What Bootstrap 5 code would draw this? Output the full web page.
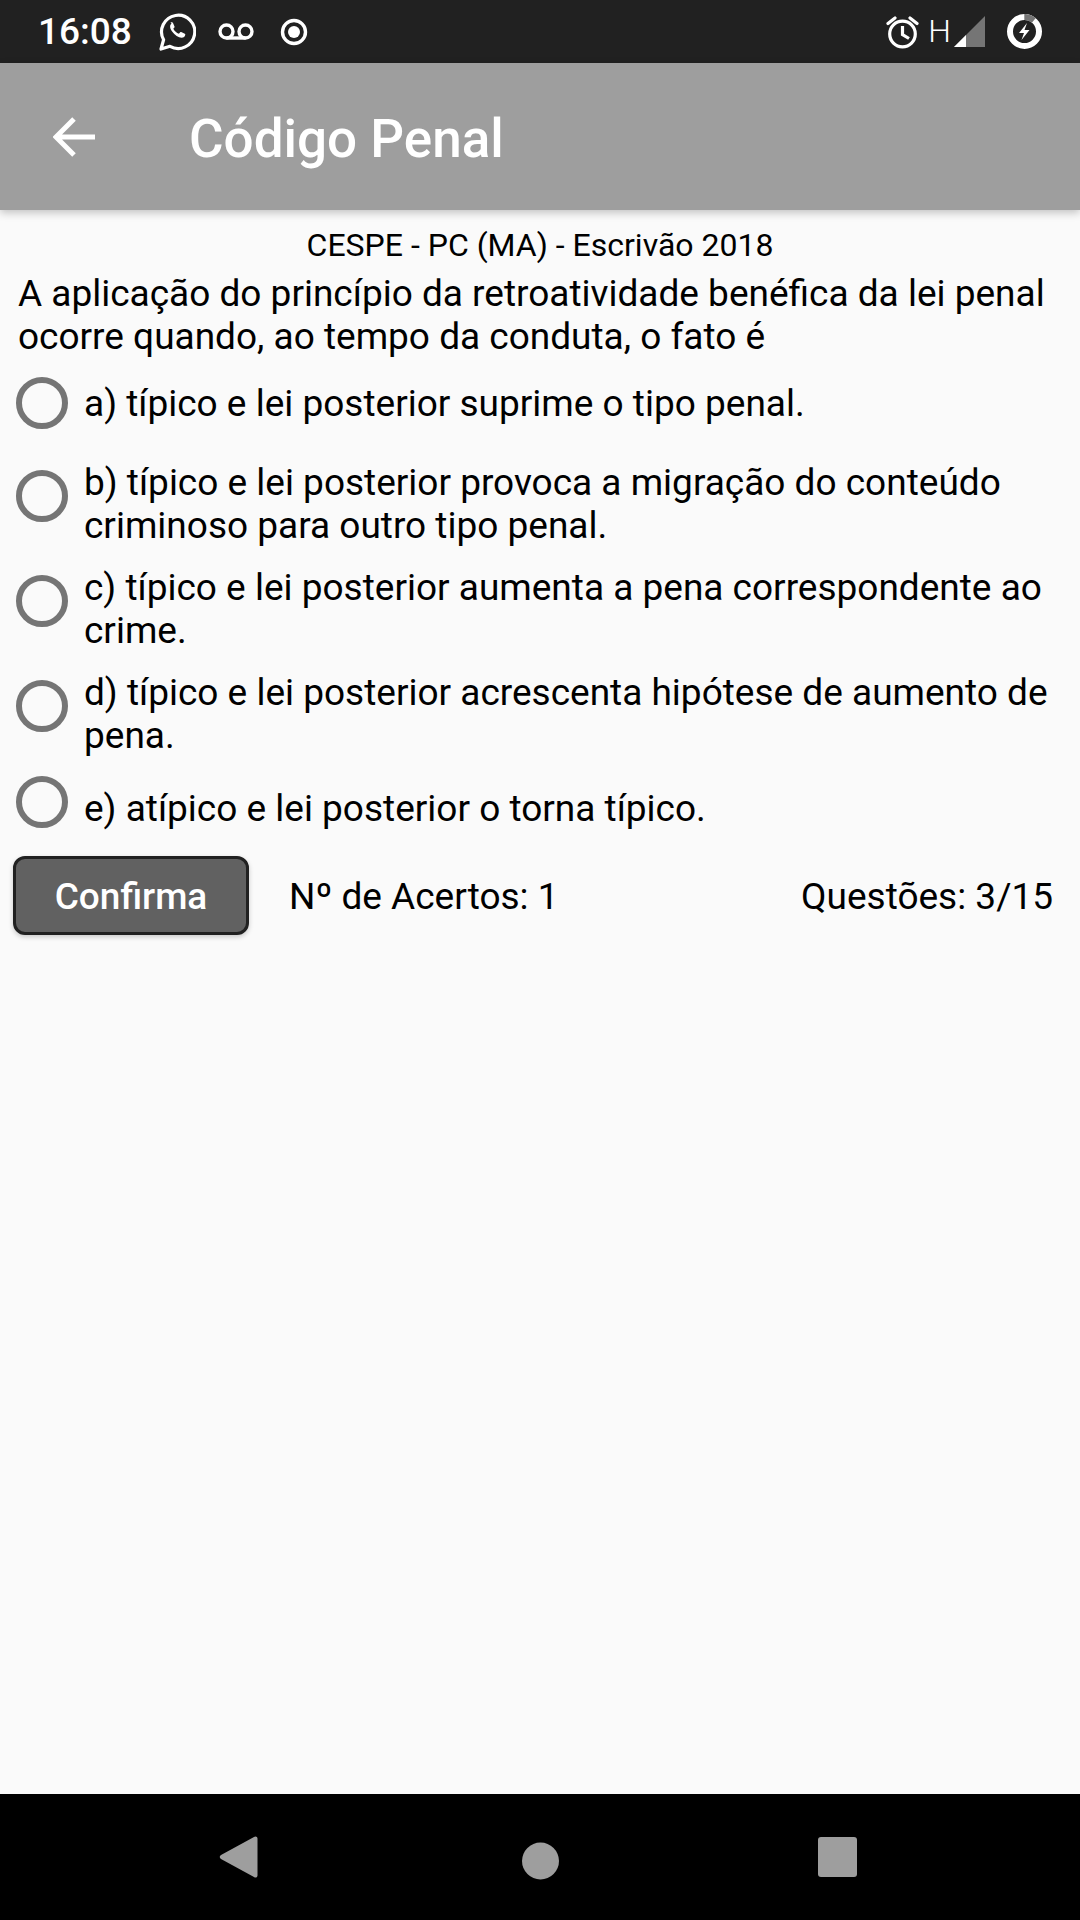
<!DOCTYPE html>
<html>
<head>
  <title>Código Penal</title>
  <link rel="stylesheet" href="https://cdn.jsdelivr.net/npm/bootstrap@5.3.0/dist/css/bootstrap.min.css">
  <style>
    html, body { margin: 0; height: 1920px; overflow: hidden; }
    body { font-family: Roboto, "Liberation Sans", sans-serif; background: #fafafa; color: #000; }
    .screen { height: 1920px; }
    .status-bar { height: 63px; background: #212121; color: #fff; flex: none; }
    .status-time { font-size: 37px; font-weight: 500; margin-left: 38px; line-height: 63px; width: 121px; }
    .ic-voice { margin-left: 22px; }
    .ic-rec { margin-left: 26px; }
    .status-right { margin-right: 38px; }
    .status-h { font-size: 32px; line-height: 63px; margin: 0 3px 0 9px; font-weight: 300; }
    .ic-batt { margin-left: 21px; }
    .app-bar { height: 147px; background: #9e9e9e; color: #fff; flex: none; box-shadow: 0 3px 8px rgba(0,0,0,.22); }
    .ic-back { margin-left: 53px; }
    .app-title { font-size: 53px; font-weight: 500; margin: 5px 0 0 94px; line-height: 1; }
    .quiz { flex: 1 1 auto; padding-top: 17px; font-size: 37px; line-height: 43px; }
    .exam { font-size: 32px; line-height: 37px; text-align: center; }
    .question { padding: 8px 18px 0; }
    .opt { padding-left: 16px; padding-right: 10px; align-items: flex-start; }
    .opt .form-check-input { width: 52px; height: 52px; margin: 0 16px 0 0; flex: none; background: none; border: 6px solid #757575; box-shadow: none; }
    .opt-a { margin-top: 19px; height: 84px; }
    .opt-a span { padding-top: 5px; }
    .opt-b { height: 105px; }
    .opt-b .form-check-input { margin-top: 9px; }
    .opt-e { height: 70px; }
    .opt-e span { padding-top: 11px; }
    .result-row { margin-top: 10px; padding: 0 27px 0 13px; }
    .btn-confirm { width: 236px; height: 79px; padding: 2px 0 0; background: #616161; border: 3px solid #212121; border-radius: 12px; color: #fff; font-size: 37px; font-weight: 500; box-shadow: 0 2px 5px rgba(0,0,0,.2); }
    .hits { margin-left: 40px; padding-top: 2px; }
    .total { padding-top: 2px; }
    .nav-bar { height: 126px; background: #000; flex: none; }
    .nav-icons { display: block; }
  </style>
</head>
<body>
  <div class="screen d-flex flex-column">
    <div class="status-bar d-flex align-items-center">
      <div class="status-time">16:08</div>
      <svg width="37" height="38" viewBox="0 0 37 38" fill="none" stroke="#fff" stroke-width="3.2">
        <path d="M2 36l2.6-9.2A16.6 16.6 0 1 1 11 33.3z" stroke-linejoin="round"/>
        <path d="M12.5 10.5c-2 1.6-1.8 4.6.6 8 2.7 3.8 6.3 6.3 9.5 6.3 2 0 3.4-1.1 3.7-3 .1-.5-.1-.8-.5-1l-3.6-1.8c-.4-.2-.7-.1-1 .2l-1.3 1.6c-2.4-.9-4.3-2.6-5.6-5l1.1-1.4c.2-.3.3-.6.1-1l-1.5-3.5c-.2-.5-1.9-.8-2.5-.4z" fill="#fff" stroke="none"/>
      </svg>
      <svg class="ic-voice" width="36" height="18" viewBox="0 0 36 18" fill="none" stroke="#fff" stroke-width="3.4">
        <circle cx="8.5" cy="8.5" r="6.5"/><circle cx="27.5" cy="8.5" r="6.5"/><path d="M8.5 15h19"/>
      </svg>
      <svg class="ic-rec" width="28" height="28" viewBox="0 0 28 28">
        <circle cx="14" cy="14" r="11.5" fill="none" stroke="#fff" stroke-width="3.4"/><circle cx="14" cy="14" r="6" fill="#fff"/>
      </svg>
      <div class="status-right ms-auto d-flex align-items-center">
        <svg width="33" height="34" viewBox="0 0 33 34" fill="none" stroke="#fff" stroke-width="3.2">
          <circle cx="16.5" cy="19" r="12.8"/><path d="M16.5 11v8.5l6.5 4"/><path d="M2 8.5L9 3M31 8.5L24 3" stroke-linecap="round"/>
        </svg>
        <span class="status-h">H</span>
        <svg width="32" height="32" viewBox="0 0 32 32"><path d="M31 0v31H0z" fill="#757575"/><path d="M12 19v12H0z" fill="#fff"/></svg>
        <svg class="ic-batt" width="35" height="35" viewBox="0 0 35 35">
          <circle cx="17.5" cy="17.5" r="14.5" fill="none" stroke="#fff" stroke-width="6"/>
          <path d="M17.5 3A14.5 14.5 0 0 0 8 6.500" fill="none" stroke="#757575" stroke-width="6" transform="rotate(40 17.5 17.5)"/>
          <path d="M20 9l-8 10h5l-2.5 7 8-10h-5z" fill="#fff"/>
        </svg>
      </div>
    </div>

    <header class="app-bar d-flex align-items-center">
      <svg class="ic-back" width="42" height="42" viewBox="0 0 42 42" fill="none" stroke="#fff" stroke-width="5">
        <path d="M42 21H4M21 3L3 21l18 18"/>
      </svg>
      <h1 class="app-title">Código Penal</h1>
    </header>

    <main class="quiz">
      <div class="exam">CESPE - PC (MA) - Escrivão 2018</div>
      <div class="question">A aplicação do princípio da retroatividade benéfica da lei penal ocorre quando, ao tempo da conduta, o fato é</div>
      <label class="opt opt-a d-flex"><input class="form-check-input" type="radio" name="alt"><span>a) típico e lei posterior suprime o tipo penal.</span></label>
      <label class="opt opt-b d-flex"><input class="form-check-input" type="radio" name="alt"><span>b) típico e lei posterior provoca a migração do conteúdo criminoso para outro tipo penal.</span></label>
      <label class="opt opt-b d-flex"><input class="form-check-input" type="radio" name="alt"><span>c) típico e lei posterior aumenta a pena correspondente ao crime.</span></label>
      <label class="opt opt-b d-flex"><input class="form-check-input" type="radio" name="alt"><span>d) típico e lei posterior acrescenta hipótese de aumento de pena.</span></label>
      <label class="opt opt-e d-flex"><input class="form-check-input" type="radio" name="alt"><span>e) atípico e lei posterior o torna típico.</span></label>
      <div class="result-row d-flex align-items-center">
        <button type="button" class="btn btn-confirm">Confirma</button>
        <span class="hits">Nº de Acertos: 1</span>
        <span class="total ms-auto">Questões: 3/15</span>
      </div>
    </main>

    <footer class="nav-bar">
      <svg class="nav-icons" width="1080" height="126" viewBox="0 0 1080 126" fill="#9e9e9e">
        <path d="M254 43c1.5-1.200 3.5-.3 3.5 1.500v37c0 1.800-2 2.700-3.500 1.500l-33-18c-1.700-1-1.700-3 0-4z"/>
        <circle cx="540.5" cy="67" r="18.5"/>
        <rect x="818" y="43" width="39" height="40" rx="3"/>
      </svg>
    </footer>
  </div>
</body>
</html>
